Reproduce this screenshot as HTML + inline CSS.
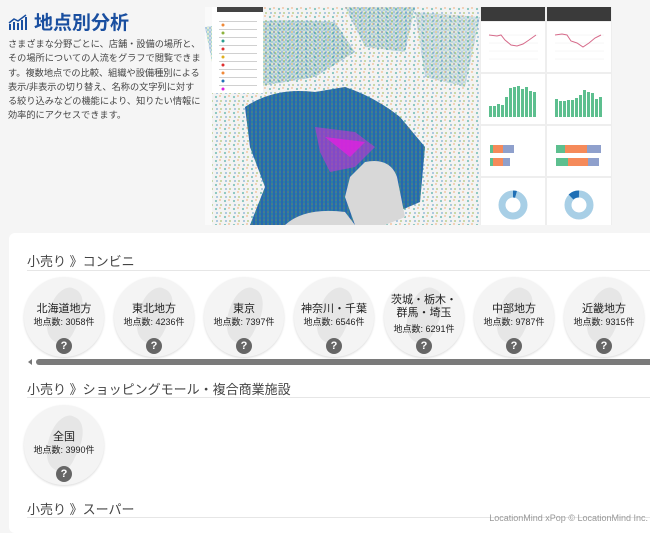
<!DOCTYPE html>
<html><head><meta charset="utf-8"><style>
*{margin:0;padding:0;box-sizing:border-box}
body{width:650px;height:525px;overflow:hidden;background:#f5f5f5;font-family:"Liberation Sans","Noto Sans CJK JP",sans-serif;position:relative;color:#333}
.title{position:absolute;left:8px;top:8px;display:flex;align-items:center;gap:6px}
.title span{font-size:19px;font-weight:bold;color:#1a4fa0}
.desc{position:absolute;left:8px;top:37px;width:205px;font-size:9.2px;line-height:14.3px;color:#444;white-space:nowrap}
.shot{position:absolute;left:205px;top:7px;width:407px;height:218px;background:#fff}
.card{position:absolute;left:9px;top:233px;width:650px;height:300px;background:#fff;border-radius:6px}
.h{position:absolute;left:27px;font-size:13px;color:#444}
.line{position:absolute;left:27px;right:0;height:1px;background:#e6e6e6}
.c{position:absolute;width:80px;height:80px;border-radius:50%;background:#f4f4f4;box-shadow:0 1px 2px rgba(0,0,0,.15);text-align:center;overflow:hidden}
.c .n{font-size:11px;color:#222;margin-top:26px;line-height:13px}
.c .k{font-size:9px;color:#222;line-height:12px}
.c .q{position:absolute;left:32px;bottom:3px;width:16px;height:16px;border-radius:50%;background:#666;color:#fff;font-size:11px;font-weight:bold;line-height:16px}
.c .m{position:absolute;left:24px;top:10px;width:32px;height:56px;background:#e6e6e6;border-radius:40% 50% 30% 60%;transform:rotate(25deg)}
.foot{position:absolute;right:2px;bottom:2px;font-size:9px;color:#999}
</style></head><body>
<div class="title"><svg width="20" height="16" viewBox="0 0 20 16"><g fill="#1a4fa0"><rect x="1" y="10" width="2" height="6"/><rect x="5" y="8" width="2" height="8"/><rect x="9" y="9" width="2" height="7"/><rect x="13" y="6" width="2" height="10"/><rect x="17" y="3" width="2" height="13"/></g><polyline points="1,9 6,5 10,7 18,1" fill="none" stroke="#1a4fa0" stroke-width="1.5"/></svg><span>地点別分析</span></div>
<div class="desc">さまざまな分野ごとに、店舗・設備の場所と、<br>その場所についての人流をグラフで閲覧できま<br>す。複数地点での比較、組織や設備種別による<br>表示/非表示の切り替え、名称の文字列に対す<br>る絞り込みなどの機能により、知りたい情報に<br>効率的にアクセスできます。</div>
<div class="shot"><svg width="407" height="218" viewBox="0 0 407 218">
<defs><pattern id="d" width="4" height="4" patternUnits="userSpaceOnUse"><circle cx="1" cy="1" r="1" fill="#1f6fb5"/><circle cx="3" cy="3" r="1" fill="#2a9d8f"/><circle cx="3" cy="1" r=".8" fill="#8db33e"/><circle cx="1" cy="3" r=".8" fill="#2a66ad"/></pattern>
<pattern id="s" width="9" height="8" patternUnits="userSpaceOnUse"><circle cx="2" cy="2" r="1.1" fill="#2a9d8f"/><circle cx="7" cy="6" r="1" fill="#8db33e"/><circle cx="6" cy="1" r=".9" fill="#f08a3a"/><circle cx="3" cy="6" r=".9" fill="#1f6fb5"/></pattern></defs>
<rect x="0" y="0" width="7" height="218" fill="#fafafa"/>
<rect x="7" y="0" width="268" height="218" fill="#f3f3f3"/>
<path d="M7 0H275V218H7Z" fill="url(#s)" opacity=".55"/>
<path d="M40 100Q70 80 110 85L140 80Q170 90 195 110L220 140L215 195L180 210L150 218H45L60 180L45 140Z" fill="#2a66ad"/>
<path d="M40 100Q70 80 110 85L140 80Q170 90 195 110L220 140L215 195L180 210L150 218H45L60 180L45 140Z" fill="url(#d)" opacity=".6"/>
<path d="M0 20Q60 10 130 15L150 45L110 70L50 80L10 70Z" fill="url(#d)" opacity=".5"/>
<path d="M140 0H210L200 45L160 40Z" fill="url(#d)" opacity=".45"/>
<path d="M210 5L275 10L260 80L220 70Z" fill="url(#d)" opacity=".35"/>
<path d="M160 155Q185 150 192 170L200 210L180 218H150L140 190L145 170Z" fill="#d8d8d8"/>
<path d="M80 218Q100 200 140 205L150 218Z" fill="#d8d8d8"/>
<path d="M110 120L150 125L170 140L150 160L125 165L115 145Z" fill="#d030d8" opacity=".55"/>
<path d="M120 130L160 135L145 150Z" fill="#e020e0" opacity=".8"/>
<rect x="7" y="0" width="51" height="86" fill="#fff"/><rect x="12" y="0" width="46" height="5" fill="#444"/>
<g fill="#bbb"><rect x="14" y="14" width="38" height=".7"/><rect x="14" y="22" width="38" height=".7"/><rect x="14" y="30" width="38" height=".7"/><rect x="14" y="38" width="38" height=".7"/><rect x="14" y="46" width="38" height=".7"/><rect x="14" y="54" width="38" height=".7"/><rect x="14" y="62" width="38" height=".7"/><rect x="14" y="70" width="38" height=".7"/><rect x="14" y="78" width="38" height=".7"/></g>
<g><circle cx="18" cy="18" r="1.5" fill="#f08a3a"/><circle cx="18" cy="26" r="1.5" fill="#8db33e"/><circle cx="18" cy="34" r="1.5" fill="#2a9d8f"/><circle cx="18" cy="42" r="1.5" fill="#e03030"/><circle cx="18" cy="50" r="1.5" fill="#e0b020"/><circle cx="18" cy="58" r="1.5" fill="#e03030"/><circle cx="18" cy="66" r="1.5" fill="#f08a3a"/><circle cx="18" cy="74" r="1.5" fill="#1f6fb5"/><circle cx="18" cy="82" r="1.5" fill="#e020e0"/></g>
<rect x="275" y="0" width="132" height="218" fill="#eee"/>
<rect x="276" y="0" width="64" height="14" fill="#3a3a3a"/><rect x="342" y="0" width="64" height="14" fill="#3a3a3a"/>
<g fill="#fff"><rect x="276" y="15" width="64" height="50"/><rect x="342" y="15" width="64" height="50"/><rect x="276" y="67" width="64" height="50"/><rect x="342" y="67" width="64" height="50"/><rect x="276" y="119" width="64" height="50"/><rect x="342" y="119" width="64" height="50"/><rect x="276" y="171" width="64" height="47"/><rect x="342" y="171" width="64" height="47"/></g>
<g stroke="#eee" stroke-width=".5"><path d="M284 28H333M284 36H333M284 44H333M284 52H333M350 28H399M350 36H399M350 44H399M350 52H399"/></g>
<polyline points="284,28 292,29 296,28 300,33 306,38 312,39 318,37 324,33 331,28" fill="none" stroke="#d66a8a" stroke-width="1"/>
<polyline points="350,28 357,27 362,28 366,34 372,36 378,40 384,36 390,31 396,28" fill="none" stroke="#d66a8a" stroke-width="1"/>
<g fill="#5dbf8f"><rect x="284" y="99" width="3" height="11"/><rect x="288" y="99" width="3" height="11"/><rect x="292" y="97" width="3" height="13"/><rect x="296" y="98" width="3" height="12"/><rect x="300" y="90" width="3" height="20"/><rect x="304" y="81" width="3" height="29"/><rect x="308" y="80" width="3" height="30"/><rect x="312" y="79" width="3" height="31"/><rect x="316" y="82" width="3" height="28"/><rect x="320" y="80" width="3" height="30"/><rect x="324" y="84" width="3" height="26"/><rect x="328" y="85" width="3" height="25"/>
<rect x="350" y="92" width="3" height="18"/><rect x="354" y="94" width="3" height="16"/><rect x="358" y="94" width="3" height="16"/><rect x="362" y="93" width="3" height="17"/><rect x="366" y="93" width="3" height="17"/><rect x="370" y="91" width="3" height="19"/><rect x="374" y="88" width="3" height="22"/><rect x="378" y="83" width="3" height="27"/><rect x="382" y="85" width="3" height="25"/><rect x="386" y="86" width="3" height="24"/><rect x="390" y="92" width="3" height="18"/><rect x="394" y="90" width="3" height="20"/></g>
<rect x="285" y="138" width="3" height="8" fill="#5dbf8f"/><rect x="288" y="138" width="10" height="8" fill="#f58a5a"/><rect x="298" y="138" width="11" height="8" fill="#8fa0cc"/>
<rect x="285" y="151" width="3" height="8" fill="#5dbf8f"/><rect x="288" y="151" width="10" height="8" fill="#f58a5a"/><rect x="298" y="151" width="7" height="8" fill="#8fa0cc"/>
<rect x="351" y="138" width="9" height="8" fill="#5dbf8f"/><rect x="360" y="138" width="22" height="8" fill="#f58a5a"/><rect x="382" y="138" width="14" height="8" fill="#8fa0cc"/>
<rect x="351" y="151" width="12" height="8" fill="#5dbf8f"/><rect x="363" y="151" width="20" height="8" fill="#f58a5a"/><rect x="383" y="151" width="11" height="8" fill="#8fa0cc"/>
<circle cx="308" cy="198" r="11" fill="none" stroke="#a8cfe6" stroke-width="7"/><path d="M308 187A11 11 0 0 1 311 187.4" stroke="#1f6fb5" stroke-width="7" fill="none"/>
<circle cx="374" cy="198" r="11" fill="none" stroke="#a8cfe6" stroke-width="7"/><path d="M366 190A11 11 0 0 1 374 187" stroke="#1f6fb5" stroke-width="7" fill="none"/>
</svg></div>
<div class="card"></div>
<div class="h" style="top:251px">小売り 》コンビニ</div><div class="line" style="top:270px"></div>
<div class="c" style="left:24px;top:277px"><div class="m"></div><div style="position:relative"><div class="n">北海道地方</div><div class="k">地点数: 3058件</div></div><div class="q">?</div></div>
<div class="c" style="left:114px;top:277px"><div class="m"></div><div style="position:relative"><div class="n">東北地方</div><div class="k">地点数: 4236件</div></div><div class="q">?</div></div>
<div class="c" style="left:204px;top:277px"><div class="m"></div><div style="position:relative"><div class="n">東京</div><div class="k">地点数: 7397件</div></div><div class="q">?</div></div>
<div class="c" style="left:294px;top:277px"><div class="m"></div><div style="position:relative"><div class="n">神奈川・千葉</div><div class="k">地点数: 6546件</div></div><div class="q">?</div></div>
<div class="c" style="left:384px;top:277px"><div class="m"></div><div style="position:relative"><div class="n" style="margin-top:17px">茨城・栃木・<br>群馬・埼玉</div><div class="k" style="margin-top:3px">地点数: 6291件</div></div><div class="q">?</div></div>
<div class="c" style="left:474px;top:277px"><div class="m"></div><div style="position:relative"><div class="n">中部地方</div><div class="k">地点数: 9787件</div></div><div class="q">?</div></div>
<div class="c" style="left:564px;top:277px"><div class="m"></div><div style="position:relative"><div class="n">近畿地方</div><div class="k">地点数: 9315件</div></div><div class="q">?</div></div>
<div style="position:absolute;left:28px;top:359px;width:0;height:0;border:3px solid transparent;border-right:4px solid #777;border-left:0"></div>
<div style="position:absolute;left:36px;top:359px;width:620px;height:6px;border-radius:3px;background:#7a7a7a"></div>
<div class="h" style="top:379px">小売り 》ショッピングモール・複合商業施設</div><div class="line" style="top:397px"></div>
<div class="c" style="left:24px;top:405px"><div class="m"></div><div style="position:relative"><div class="n">全国</div><div class="k">地点数: 3990件</div></div><div class="q">?</div></div>
<div class="h" style="top:499px">小売り 》スーパー</div><div class="line" style="top:517px"></div>
<div class="foot">LocationMind xPop © LocationMind Inc.</div>
</body></html>
